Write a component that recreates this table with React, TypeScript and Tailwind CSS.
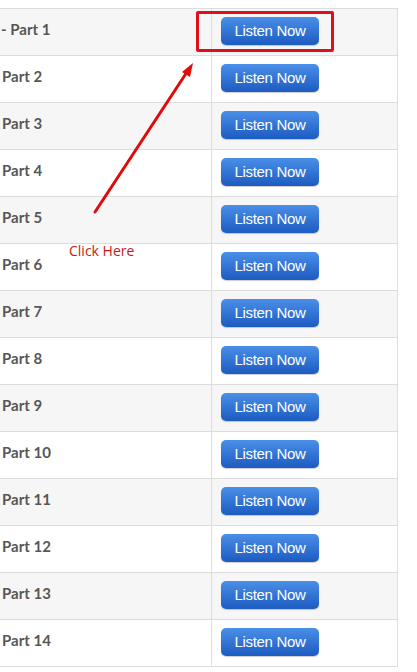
import React from 'react'

const parts = Array.from({ length: 14 }, (_, i) => i + 1)

export default function App() {
  return (
    <div className="relative w-[417px] h-[672px] bg-white overflow-hidden pt-[8px]">
      {/* table */}
      <div className="ml-[-1px] w-[399px] border-x border-b border-[#dddddd]">
        {parts.map((n) => (
          <div
            key={n}
            className={`flex h-[47px] border-t border-[#dddddd] ${n % 2 === 1 ? 'bg-[#f6f6f6]' : 'bg-white'}`}
          >
            <div className="w-[211px] pl-[2px] pt-[10px] text-[15px] leading-[20px] font-bold text-[#575757] font-['Lato',sans-serif] whitespace-nowrap">
              {n === 1 ? <span className="ml-[-1px]">- Part 1</span> : `Part ${n}`}
            </div>
            <div className="flex-1 border-l border-[#dddddd] pl-[9px] pt-[8px]">
              <button className="w-[98px] h-[28px] rounded-[5px] bg-linear-to-b from-[#4a8fe8] to-[#1c5bc1] text-white text-[15px] leading-[28px] tracking-[-0.3px] font-['Liberation_Sans',Arial,sans-serif] shadow-[0_1px_1px_rgba(0,0,0,0.2)]">
                Listen Now
              </button>
            </div>
          </div>
        ))}
      </div>

      {/* highlight box */}
      <div className="absolute left-[196px] top-[11px] w-[138px] h-[41px] border-[3px] border-[#e0101a] rounded-[2px]" />

      {/* arrow */}
      <svg className="absolute left-0 top-0" width="417" height="672" viewBox="0 0 417 672">
        <line x1="95" y1="212" x2="187" y2="72" stroke="#e00a0a" strokeWidth="3" strokeLinecap="round" />
        <polygon points="193,63 182,72 190,77" fill="#e00a0a" />
      </svg>

      <div className="absolute left-[69px] top-[242px] text-[14px] leading-[17px] text-[#c41a1a] font-['Open_Sans',sans-serif]">
        Click Here
      </div>
    </div>
  )
}
